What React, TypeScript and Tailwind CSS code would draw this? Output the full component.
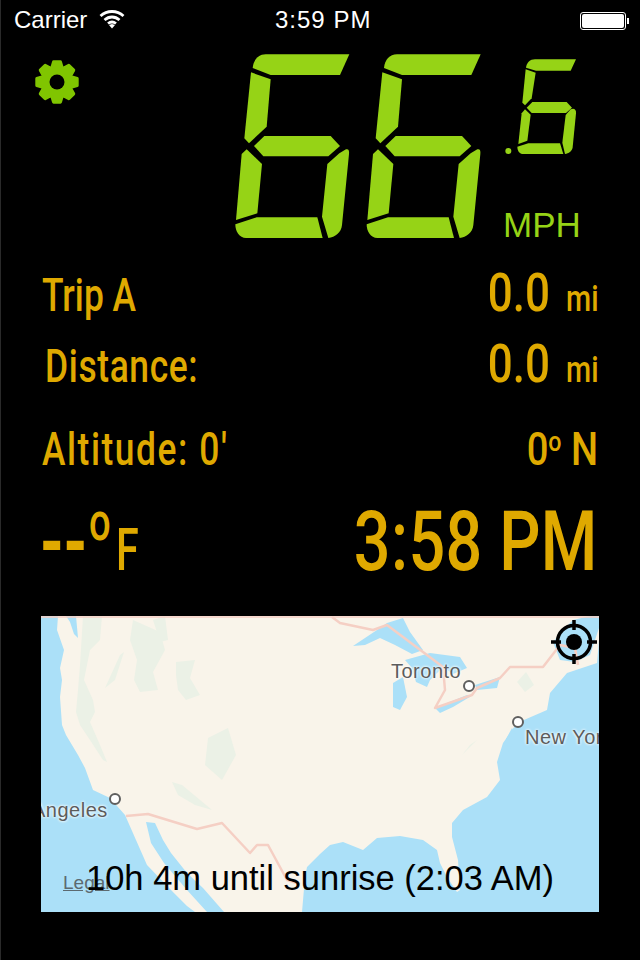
const amber = 'text-[#dfa900]'

function gearPath() {
  // 8 teeth, centre 25,25
  const pts: string[] = []
  for (let i = 0; i < 8; i++) {
    const a = (i * Math.PI) / 4 - Math.PI / 2
    const w = 0.17
    const corners: [number, number][] = [
      [15, a - 0.36],
      [20.5, a - w],
      [20.5, a + w],
      [15, a + 0.36],
    ]
    for (const [r, t] of corners) {
      pts.push(`${(25 + r * Math.cos(t)).toFixed(2)},${(25 + r * Math.sin(t)).toFixed(2)}`)
    }
  }
  return pts.join(' ')
}

function Gear() {
  return (
    <svg width="50" height="50" viewBox="0 0 50 50">
      <polygon points={gearPath()} fill="#80c500" stroke="#80c500" strokeWidth="3" strokeLinejoin="round" />
      <circle cx="25" cy="25" r="7.5" fill="#000" />
    </svg>
  )
}

function BigSix({ dx }: { dx: number }) {
  return (
    <g transform={`translate(${dx} 0)`}>
      <path d="M98 84C100 60 115 43 137 43L388 43L360 105L152 105Z" />
      <path d="M93 97L152 118L140 260L87 310L73 295Z" />
      <path d="M102 318L133 288L332 288L360 318L325 349L130 349Z" />
      <path d="M65 342L80 328L126 372L112 520L48 540Z" />
      <path d="M46 553L110 532L292 532L308 594L78 594C58 594 46 575 46 553Z" />
      <path d="M322 372L358 340L378 328C386 326 388 332 387 342L366 555C364 578 345 592 325 594L306 530Z" />
    </g>
  )
}

function Speed() {
  return (
    <svg width="380" height="210" viewBox="0 0 1140 630" fill="#96d316">
      <BigSix dx={0} />
      <BigSix dx={394} />
      <circle cx="865" cy="333" r="9" />
      <path d="M918 83C920 68 930 58 945 58L1068 58L1052 92L948 92Z" />
      <path d="M917 88L947 98L935 175L915 196L907 188Z" />
      <path d="M920 203L937 186L1040 186L1056 203L1038 219L935 219Z" />
      <path d="M905 220L915 208L932 224L922 302L895 312Z" />
      <path d="M892 320L925 310L1020 310L1030 342L910 342C898 342 892 332 892 320Z" />
      <path d="M1037 225L1052 208C1062 204 1069 208 1068 220L1058 322C1056 334 1046 341 1035 342L1027 308Z" />
    </svg>
  )
}

function Wifi() {
  return (
    <svg width="26" height="20" viewBox="0 0 26 20" fill="none" stroke="#fff" strokeWidth="2.8">
      <path d="M1.5 7C8 1 18 1 24.5 7" />
      <path d="M5.5 11C10 7 16 7 20.5 11" />
      <path d="M9 14.5C11.5 12.6 14.5 12.6 17 14.5" />
      <path d="M10 16L13 19.5L16 16L13 15Z" fill="#fff" stroke="none" />
    </svg>
  )
}

function MapArt() {
  return (
    <svg className="block" width="558" height="296" viewBox="41 616 558 296">
      <rect x="41" y="616" width="558" height="296" fill="#abe0f8" />
      <path
        fill="#f9f4ea"
        d="M58 616L57 630L64 650L60 668L62 680L60 697L62 725L66 735L78 755L85 768L93 790L110 798L125 815L136 840L147 865L172 891L187 906L195 912L302 912L305 877L307 867L320 854L330 845L343 842L363 850L377 838L400 836L423 840L437 850L440 863L447 877L457 892L460 890L458 860L452 837L452 823L463 810L487 797L500 780L497 762L503 743L517 723L547 710L550 693L567 673L597 663L599 640L599 616Z"
      />
      <path fill="#abe0f8" d="M66 616L76 616L78 638L74 634L70 622Z" />
      <path fill="#abe0f8" d="M146 822L155 823L163 840L171 853L187 873L203 888L224 912L207 912L187 890L164 863L151 843Z" />
      <path fill="#abe0f8" d="M553 642L563 630L573 620L590 616L599 616L599 628L590 655L575 662L560 660Z" />
      <path fill="#abe0f8" d="M506 739L512 728L516 735L512 745L508 752Z" />
      <g fill="#abe0f8">
        <path d="M353 646L377 630L387 623L403 618L410 632L423 650L412 654L395 645L380 638L365 645Z" />
        <path d="M405 660L430 653L460 657L467 668L453 674L443 667L430 680L427 687L416 682L412 668Z" />
        <path d="M393 683L403 677L407 697L400 710L393 707Z" />
        <path d="M435 708L467 695L473 695L453 707L440 713Z" />
        <path d="M475 685L500 677L497 688L477 690Z" />
      </g>
      <g fill="#ebf1e6">
        <path d="M83 616L102 616L100 640L90 650L84 680L93 700L95 712L90 722L100 745L107 762L103 760L90 740L80 725L76 712L78 690L80 665Z" />
        <path d="M133 620L160 632L165 650L153 672L158 690L140 692L134 680L137 660L130 640Z" />
        <path d="M120 655L124 652L115 680L105 688Z" />
        <path d="M153 620L165 616L168 640L160 642Z" />
        <path d="M176 662L195 660L190 678L200 695L186 700L178 690L176 675Z" />
        <path d="M208 738L228 728L236 755L222 780L205 765Z" />
        <path d="M172 782L182 785L212 810L195 805L178 795Z" />
        <path d="M517 682L526 672L534 685L525 692Z" />
        <path d="M470 745L477 740L462 755Z" />
      </g>
      <g fill="none" stroke="#f5cfc4" strokeWidth="2.5" strokeLinejoin="round">
        <path d="M332 617L340 623L373 630L387 625L443 667L445 690L435 708L472 695L477 688L500 678L510 667L543 667L560 645L575 648L578 665" />
        <path d="M126 816L148 814L197 829L222 823L250 853L257 845L268 845L287 880L300 884" />
        <path d="M41 617L599 617" strokeWidth="1.5" />
      </g>
      <circle cx="469" cy="686" r="5" fill="#fff" stroke="#5f5f5f" strokeWidth="2" />
      <circle cx="518" cy="722" r="5" fill="#fff" stroke="#5f5f5f" strokeWidth="2" />
      <circle cx="115" cy="799" r="5" fill="#fff" stroke="#5f5f5f" strokeWidth="2" />
      <g fill="none" stroke="#000">
        <circle cx="574" cy="642" r="16.5" strokeWidth="3.5" />
        <path d="M574 620V630M574 654V664M551 642H561M587 642H597" strokeWidth="3.5" />
      </g>
      <circle cx="574" cy="642" r="8" fill="#000" />
    </svg>
  )
}

const mapLabel = "absolute text-[#5c5c5c] text-[20px] leading-none font-['Liberation_Sans',sans-serif] [text-shadow:0_0_3px_#fff,0_0_3px_#fff]"
const label = 'block origin-left scale-x-[0.77] whitespace-nowrap'
const value = 'block origin-right whitespace-nowrap'

function Row({ className, children }: { className: string; children: React.ReactNode }) {
  return <div className={`flex justify-between items-baseline ${className}`}>{children}</div>
}

function Miles() {
  return (
    <span className="flex items-baseline">
      <span className={`${value} scale-x-[0.83] text-[53px] mr-[-4px]`}>0.0</span>
      <span className="block origin-right scale-x-[0.8] text-[36px] ml-[12px] mr-[-1px]">mi</span>
    </span>
  )
}

export default function App() {
  return (
    <div className={`relative w-[640px] h-[960px] overflow-hidden bg-black border-l border-[#2a2a2a] ${amber}`}>
      <div className="flex items-center h-10 text-white text-[24px] font-['Liberation_Sans',sans-serif] relative">
        <span className="ml-[13px]">Carrier</span>
        <span className="ml-[12px] mt-[-2px]"><Wifi /></span>
        <span className="absolute left-[274px] tracking-[1px]">3:59 PM</span>
        <div className="absolute left-[579px] top-[12px] flex items-center">
          <div className="w-[46px] h-[18px] rounded-[3px] border border-white p-px">
            <div className="w-full h-full rounded-[2px] bg-white" />
          </div>
          <div className="w-[2px] h-[6px] bg-white ml-px" />
        </div>
      </div>

      <div className="relative h-[210px]">
        <div className="absolute left-[31px] top-[17px]"><Gear /></div>
        <div className="absolute left-[219px] top-0"><Speed /></div>
        <span className="absolute left-[502px] top-[167px] text-[35px] leading-none text-[#96d316] font-['Liberation_Sans',sans-serif]">MPH</span>
      </div>

      <div className="pl-[41px] pr-[42px] font-['Roboto',sans-serif] font-medium leading-none">
        <Row className="h-[71px] pt-[17px] text-[46px]">
          <span className={label}>Trip A</span>
          <Miles />
        </Row>
        <Row className="h-[71px] pt-[17px] text-[46px]">
          <span className={`${label} ml-[3px] tracking-[0.8px]`}>Distance:</span>
          <Miles />
        </Row>
        <Row className="h-[82px] pt-[34px] text-[46px]">
          <span className={`${label} tracking-[2px]`}>Altitude: 0'</span>
          <span className={`${value} scale-x-[0.83]`}>0<sup className="text-[28px] top-[-14px]">o</sup> N</span>
        </Row>
        <Row className="h-[142px] pt-[26px]">
          <span className="flex items-baseline">
            <span className="block relative top-[-2px] ml-[-3px] text-[72px] font-black tracking-[-3px] origin-left scale-x-[0.8]">--</span>
            <span className="block relative top-[-30px] ml-[-9px] text-[53px] origin-left scale-x-[0.72]">o</span>
            <span className="block text-[59px] ml-[-3px] origin-left scale-x-[0.7]">F</span>
          </span>
          <span className={`${value} scale-x-[0.77] tracking-[0.5px] text-[84px]`}>3:58 PM</span>
        </Row>
      </div>

      <div className="relative w-[558px] h-[296px] ml-10 overflow-hidden">
        <MapArt />
        <span className={`${mapLabel} left-[350px] top-[45px] tracking-[0.5px]`}>Toronto</span>
        <span className={`${mapLabel} left-[484px] top-[111px] whitespace-nowrap tracking-[0.5px]`}>New York</span>
        <span className={`${mapLabel} left-[-9px] top-[184px] tracking-[0.5px]`}>Angeles</span>
        <span className="absolute left-[22px] top-[257px] text-[#5c6a70] text-[19px] leading-none underline font-['Liberation_Sans',sans-serif]">Legal</span>
        <span className="absolute left-[45px] top-[245px] text-black text-[34.5px] leading-none whitespace-nowrap font-['Liberation_Sans',sans-serif]">10h 4m until sunrise (2:03 AM)</span>
      </div>
    </div>
  )
}
